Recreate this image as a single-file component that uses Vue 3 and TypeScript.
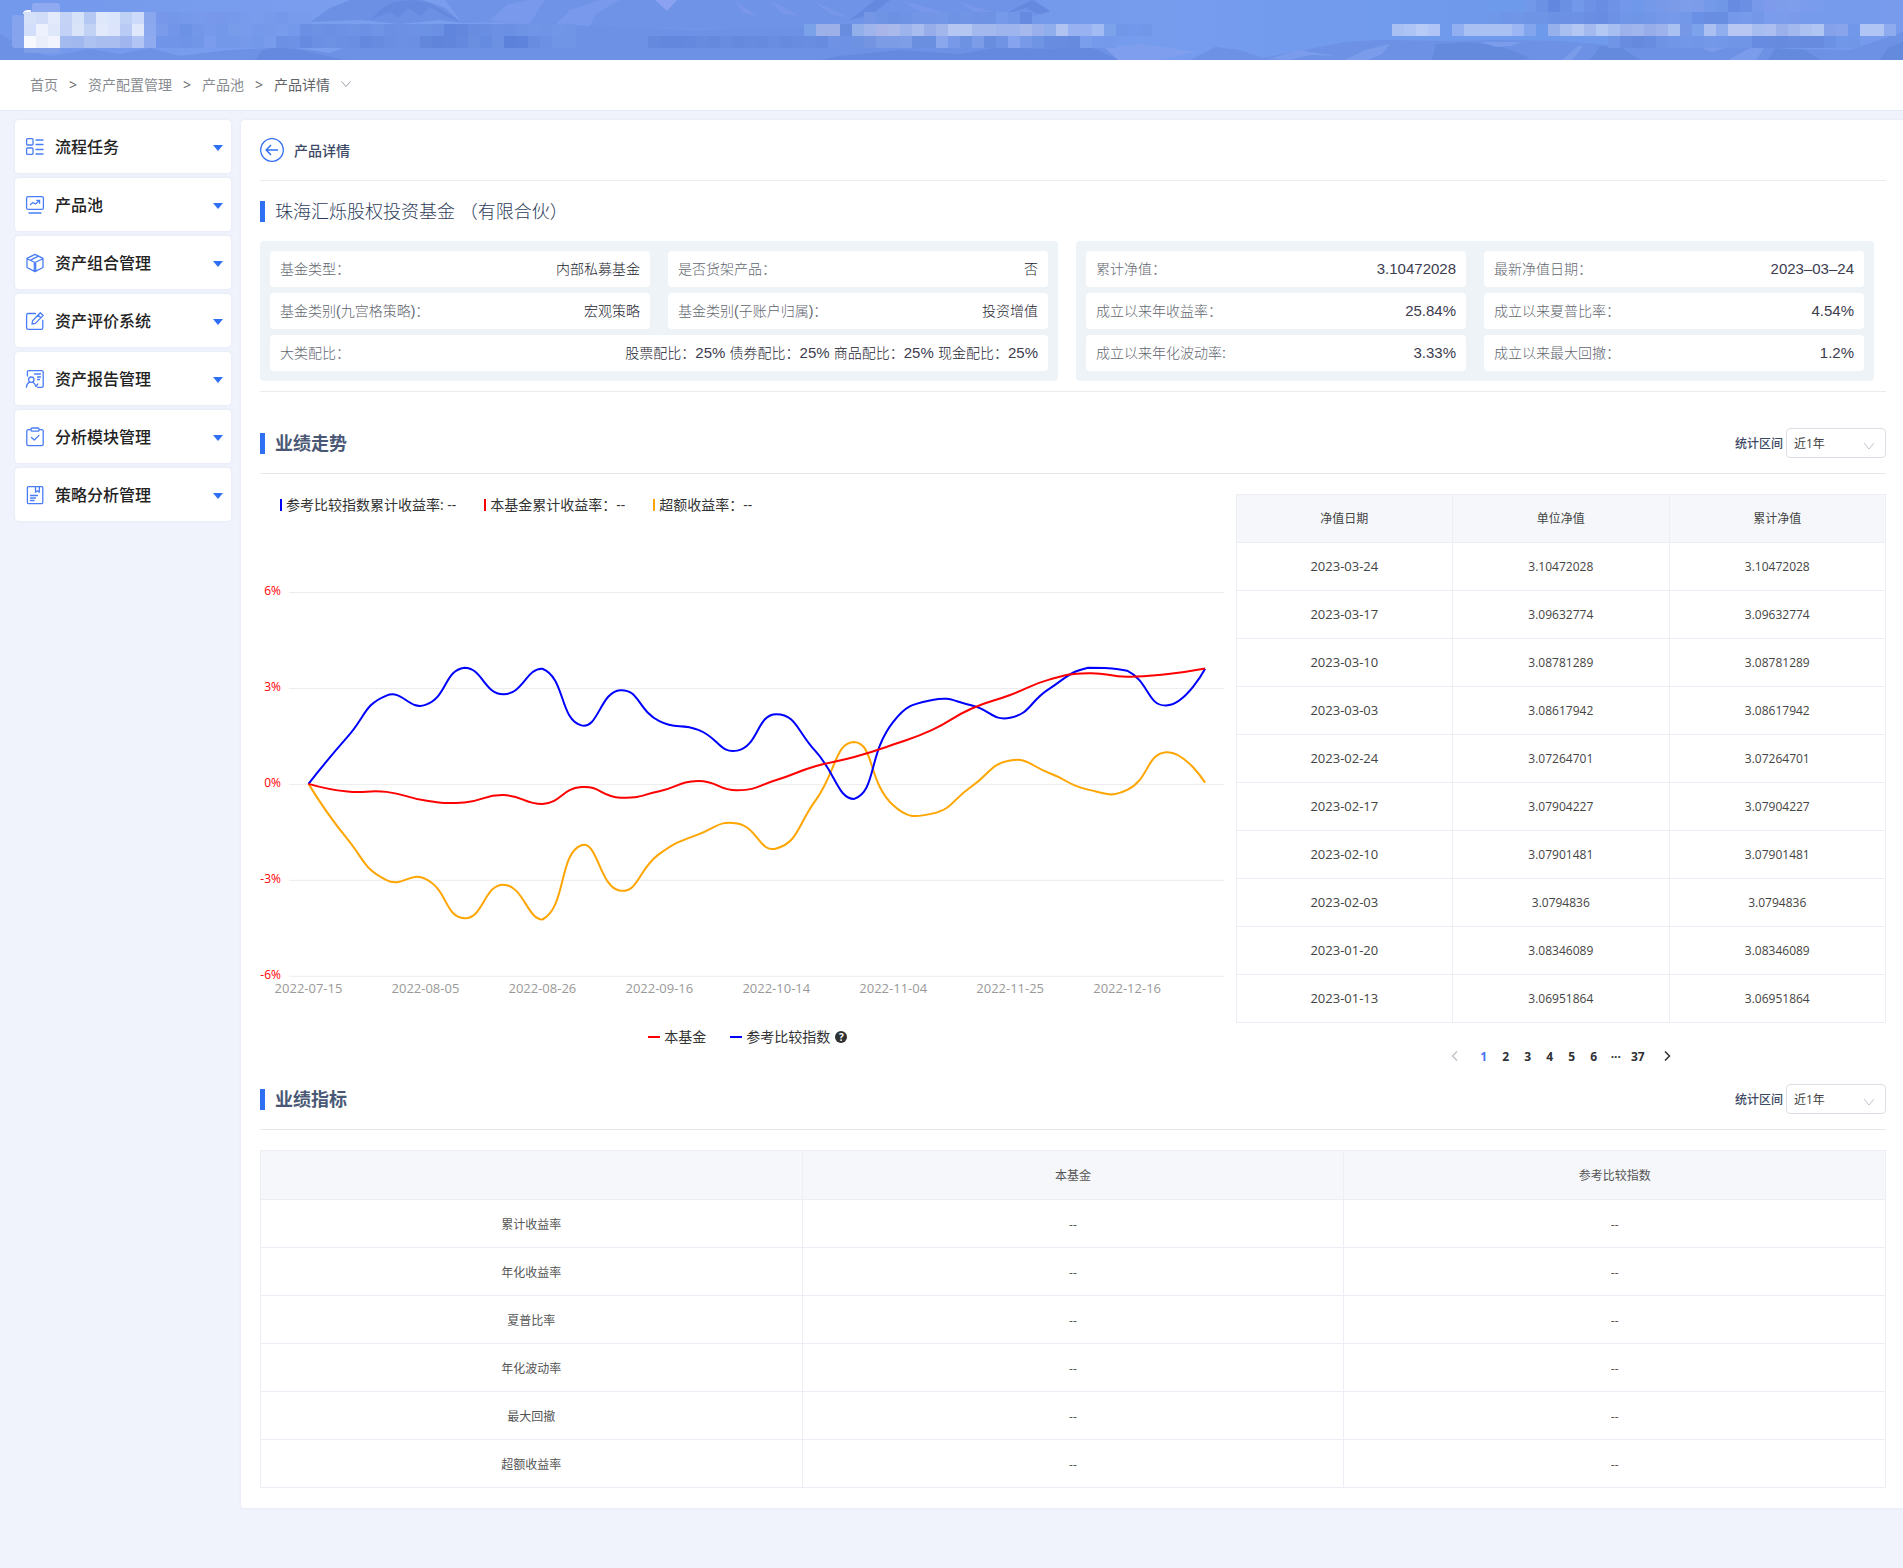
<script setup lang="ts">
import { ref } from 'vue'

interface Field {
  label: string
  value: string
}

const crumbs = ['首页', '资产配置管理', '产品池']

const menus = [
  { icon: 'tasks', text: '流程任务' },
  { icon: 'pool', text: '产品池' },
  { icon: 'cube', text: '资产组合管理' },
  { icon: 'edit', text: '资产评价系统' },
  { icon: 'report', text: '资产报告管理' },
  { icon: 'module', text: '分析模块管理' },
  { icon: 'strategy', text: '策略分析管理' },
]

const basics: Field[] = [
  { label: '基金类型：', value: '内部私募基金' },
  { label: '是否货架产品：', value: '否' },
  { label: '基金类别(九宫格策略)：', value: '宏观策略' },
  { label: '基金类别(子账户归属)：', value: '投资增值' },
]

const ratios = ['股票配比：', '债券配比：', '商品配比：', '现金配比：']

const figures: Field[] = [
  { label: '累计净值：', value: '3.10472028' },
  { label: '最新净值日期：', value: '2023–03–24' },
  { label: '成立以来年收益率：', value: '25.84%' },
  { label: '成立以来夏普比率：', value: '4.54%' },
  { label: '成立以来年化波动率:', value: '3.33%' },
  { label: '成立以来最大回撤：', value: '1.2%' },
]

const navs = [
  ['2023-03-24', '3.10472028'],
  ['2023-03-17', '3.09632774'],
  ['2023-03-10', '3.08781289'],
  ['2023-03-03', '3.08617942'],
  ['2023-02-24', '3.07264701'],
  ['2023-02-17', '3.07904227'],
  ['2023-02-10', '3.07901481'],
  ['2023-02-03', '3.0794836'],
  ['2023-01-20', '3.08346089'],
  ['2023-01-13', '3.06951864'],
]

const metrics = ['累计收益率', '年化收益率', '夏普比率', '年化波动率', '最大回撤', '超额收益率']
const pages = ['1', '2', '3', '4', '5', '6', '···', '37']
const page = ref('1')
const ranges = ['近1年', '近3年', '近5年']
const trendRange = ref('近1年')
const metricRange = ref('近1年')

/* Chart geometry */
const PLOT_LEFT = 29
const STEP = 39
const ZERO = 268
const UNIT = 32
const yTicks = [6, 3, 0, -3, -6]
const xTicks = ['2022-07-15', '2022-08-05', '2022-08-26', '2022-09-16', '2022-10-14', '2022-11-04', '2022-11-25', '2022-12-16']

const px = (i: number) => PLOT_LEFT + STEP / 2 + STEP * i
const py = (v: number) => ZERO - v * UNIT

const benchmark = [0, 1.47, 2.76, 2.47, 3.63, 2.8, 3.6, 1.83, 2.93, 1.96, 1.69, 1.04, 2.18, 1.03, -0.47, 1.94, 2.62, 2.46, 2.07, 2.97, 3.63, 3.54, 2.45, 3.6]
const fund = [0, -0.24, -0.25, -0.52, -0.58, -0.35, -0.63, -0.1, -0.43, -0.23, 0.09, -0.2, 0.12, 0.55, 0.84, 1.23, 1.69, 2.35, 2.78, 3.26, 3.46, 3.35, 3.43, 3.61]
const excess = [0, -1.73, -3.01, -2.97, -4.2, -3.15, -4.24, -1.92, -3.34, -2.19, -1.58, -1.24, -2.02, -0.53, 1.31, -0.67, -0.93, -0.09, 0.73, 0.34, -0.18, -0.19, 0.99, 0.04]

/* Bezier smoothing; control points never leave the value range of the series */
function smoothPath(values: number[]): string {
  const p = values.map((v, i) => [px(i), py(v)])
  const top = Math.min(...p.map((q) => q[1]))
  const bottom = Math.max(...p.map((q) => q[1]))
  const keep = (y: number) => Math.max(top, Math.min(bottom, y))
  let d = `M${p[0][0]} ${p[0][1]}`
  let c0 = p[0]
  for (let i = 1; i < p.length; i++) {
    const [x, y] = p[i]
    const [ax, ay] = p[i - 1]
    let c1 = [x, y]
    let next = [x, y]
    if (i < p.length - 1) {
      const [bx, by] = p[i + 1]
      const la = Math.hypot(x - ax, y - ay)
      const lb = Math.hypot(bx - x, by - y)
      const r = lb / (la + lb)
      const vx = (bx - ax) * 0.5
      const vy = (by - ay) * 0.5
      c1 = [x - vx * (1 - r), keep(y - vy * (1 - r))]
      next = [x + vx * r, keep(y + vy * r)]
    }
    d += `C${[...c0, ...c1, x, y].map((n) => n.toFixed(2)).join(' ')}`
    c0 = next
  }
  return d
}

const lines = [
  { color: '#ffa500', d: smoothPath(excess) },
  { color: '#0000ff', d: smoothPath(benchmark) },
  { color: '#ff0000', d: smoothPath(fund) },
]

/* Masked tiles in the banner: first column, row, then one colour per 12px tile ("-" leaves a hole) */
const tileRuns: [number, number, string][] = [
  [2, 1, 'd5e1f9 d0dcf8 e3eafb c3d2f5 d6e2f8 b5c8f4 dfe8fa dae4fa c0d1f6 cddafa 8aa6ec 7697ea 7597ea 7799eb 789aeb 7899eb 7798ea 7799eb 799beb 799cec 789aeb 7698ea 789bec 789bec'],
  [2, 2, 'd3dffa edf1fd dfe7fb c3d1f6 dae4f9 c2d2f5 e2e9fa dbe4fa b9cbf4 dfe7fb 8ca8ee 7a9aea 7395e9 6c92e6 7396e9 7799eb 7397e9 789bea 799bec 7598ea 7799ea 789bec 7499ea 6b8fe3 6d92e4 6b90e3 6d91e4 6e93e5 6c91e4 6f94e5 6b90e3 6c91e4 6d92e5 6c92e4 6b8fe3 6085dc 6287dd 688ce0 688de1 6c91e4 6b90e3 6e93e5 7095e7 6f94e6 7196e8 7095e7'],
  [2, 3, 'f6f8fe eaeefb f1f4fd a3baef a1b8ee aec2f2 a9beef a9beef a0b5ee b2c4f3 8faaee 7094e7 7094e7 6f93e6 7196e8 7b9cec 7498e9 7498e9 7799ea 7498e9 789bec 6c91e4 6d92e5 668adf 6b90e3 6d92e4 6b90e3 6a8fe2 6388dd 668bdf 6a8fe2 6c91e4 6b90e3 6287db 5f84da 6085db 6388dd 6a8fe1 658be0 6c91e3 5c81da 5e83dc 678ce0 6c91e4 7095e7 7095e7'],
  [54, 3, '6489dd 6287dc 6287dc 6388dd 668bdf 6489dd 688de0 6489dd 678cdf 668bde 688de1 658ade 678ce0 688de1 668bdf 7092e4'],
  [72, 1, '7496e5 7094e4 6c91e3 6e92e4 7395e6 7295e6 7396e7 6e92e4 7194e5 6f92e4 6e92e4 7799e9 7195e7 668ae0'],
  [67, 2, '7aa2e8 9db0e8 9db0e8 688cde 93afe9 9fb4ea a9b5e9 a9b9ea 9cb3eb a8bced 97adea a3b6eb b5c6f1 b5c6f1 a3b9ee a3b9ee 9eb4ec 9eb4ec a5b9ed 9ab0ec 91aeec b1c4f1 98b2f1 98b2f1 a3bbf3 7da2ec 7197e9 7298eb 7197e9'],
  [71, 3, '6d92e2 7494e2 7c9ce6 7c9ce6 7e9ee8 6b8fdf 6b8fe0 8aa6ec 7899e7 6e92e2 7d9ce7 688cde 7094e3 85a3ee 7799e8 7094e4 688de0 688cdf 668bde 7b9eec 7599eb 7499eb'],
  [127, 0, '7298e9 6b91e4 6187de 6a90e3 7198e9 6c91e5 688de2 6d92e6 7297eb 6f97ea 7599e9 7899e8 7b9be9 7d9ce9 7c9be9 7599e9 7096e6 678be0 6b90e3 7899e9 7d9bea 7d9cea 7e9deb 7b9cec 7a9cec'],
  [124, 1, '7098e9 6e95e8 7096e8 6e94e6 6e94e6 6b91e4 6b90e4 6c91e5 698ee2 678ce2 6c91e5 7096e8 6f95e7 7196e8 7698e9 7799e9 7498e8 6a90e5 688de1 688ee2 7598ea 789aeb 7597e8 7b9cec 7b9cea 7b9bea'],
  [116, 2, 'a9c0f3 aec4f4 b7cbf6 b0c5f5 - 92aff1 a9c1f2 a9c1f2 a9c1f2 a9c1f2 9bb6f2 83a5ee - 96b0ec a9bff0 b3c7f2 a4baee b3c8f2 a7bef0 9db1ea a0b5ec 97adea 9db2eb a9c1f1 7597e6 7ba2ea abbff1 90aeee b8c7f2 b8c7f2 a7bcef abbeef 99b0ea a3b9ee adc1f1 b0c5f2 85a1ea 89a4eb 7097e9 b0c5f4 b0c5f4 8fabf0'],
  [134, 3, '7095e6 688de0 6489dd 678ce0 6e93e5 7195e7 7296e8 7196e7 7498e8 7397e8 7095e6 7095e6 678be0 668bdf 658ade 678ce0 668bdf 668bdf 6b91e4 7197e9 7096e8'],
]

const tiles = tileRuns.flatMap(([col, row, colors]) =>
  colors
    .split(' ')
    .map((c, i) => ({ x: (col + i) * 12, y: row * 12, c }))
    .filter((t) => t.c.length === 6)
    .map((t) => ({ ...t, c: '#' + t.c })),
)
</script>

<template>
  <div class="page">
    <header class="banner">
      <svg class="banner-art" viewBox="0 0 1903 60" preserveAspectRatio="xMinYMin slice" aria-hidden="true">
        <defs>
          <linearGradient id="sky" x1="0" x2="1" y1="0" y2="0">
            <stop offset="0" stop-color="#7399ec" />
            <stop offset="0.2" stop-color="#7c9eef" />
            <stop offset="0.45" stop-color="#7095e8" />
            <stop offset="0.6" stop-color="#769cee" />
            <stop offset="0.8" stop-color="#6e9aec" />
            <stop offset="1" stop-color="#789bec" />
          </linearGradient>
        </defs>
        <rect width="1903" height="60" fill="url(#sky)" />
        <path fill="#6d91e5" d="M0 34 14 42 30 52 52 56 90 49 120 54 150 48 180 56 230 50 290 47 330 53 380 34 460 26 560 22 640 28 700 30 830 25 1000 26 1100 46 1140 60H0z" />
        <path fill="#6c90e4" d="M310 22 330 8 350 0 396 0 420 -1 445 8 462 23 440 20 400 24 360 20z" />
        <path fill="#6f93e6" d="M445 0H1035L1050 12 1020 20 880 18 760 29 640 28 560 22 530 26 500 22 462 23z" />
        <path fill="#7999ec" d="M490 20 508 4 530 0H545L528 26 512 23zM556 24 570 10 588 4 600 0H620L596 14 590 26z" />
        <path fill="#8aa2f1" d="M655 0H677L667 11z" />
        <path fill="#6489de" d="M370 20 382 8 394 2 410 0 430 3 446 12 460 22 444 15 430 7 420 16 408 8 398 18 390 12zM850 20 875 0H890L872 14zM1000 16 1032 0 1050 11 1038 14 1026 8z" />
        <path fill="#7897ea" d="M735 0 760 18 742 12zM770 0 800 16 782 14zM812 0 850 18 830 14zM900 0 950 14 920 12zM960 2 1000 14 975 13z" />
        <path fill="#6489de" d="M255 60 262 51 275 47 300 50 345 60zM840 56 900 50 960 54 1000 47 1040 49 1090 47 1120 60H820z" />
        <path fill="#7f9fee" d="M1105 48 1140 44 1170 48 1195 52 1160 60H1118z" />
        <path fill="#6c91e5" d="M1190 60 1215 47 1240 50 1262 58 1300 51 1345 42 1380 40 1440 41 1500 40 1560 41 1620 46 1700 44 1760 48 1850 50 1903 32V60z" />
        <path fill="#648ade" d="M1432 60 1436 44 1470 42 1500 46 1530 58 1520 60zM1590 60 1600 46 1622 48 1640 60zM1768 60 1775 48 1805 50 1820 60zM1880 60 1888 48 1903 42V60z" />
        <path fill="#7a9ceb" d="M1268 59 1300 50 1335 56 1310 55 1290 60zM1345 60 1365 50 1390 44 1382 54 1368 60zM1480 42H1522L1512 46 1496 47zM1562 60 1578 46 1583 46 1572 60zM1694 45 1736 44 1712 52zM1728 60 1752 47 1764 48 1756 60z" />
        <rect x="32" y="3" width="28" height="12" rx="3" fill="#8faaf0" />
        <rect x="12" y="15" width="14" height="33" rx="3" fill="#86a3ee" />
        <rect x="24" y="46" width="36" height="7" fill="#7f9eea" />
        <path d="M24 14q0-3 4-3h3" fill="none" stroke="#f3f7ff" stroke-width="2" />
        <rect v-for="(t, i) in tiles" :key="i" :x="t.x" :y="t.y" width="12" height="12" :fill="t.c" />
      </svg>
    </header>

    <nav class="crumbs" aria-label="面包屑">
      <template v-for="c in crumbs" :key="c">
        <a href="#">{{ c }}</a>
        <span class="sep">&gt;</span>
      </template>
      <a href="#" class="current">产品详情</a>
      <svg class="crumb-arrow" width="12" height="8" viewBox="0 0 12 8" fill="none" stroke="#9aa0a8"><path d="M1.500 1.500 6 6.500l4.500-5" /></svg>
    </nav>

    <div class="body">
      <aside class="side">
        <button v-for="m in menus" :key="m.text" type="button" class="menu">
          <svg class="menu-icon" width="20" height="20" viewBox="0 0 20 20" fill="none" stroke="#4a7df5" stroke-width="1.300" stroke-linecap="round" stroke-linejoin="round">
            <g v-if="m.icon === 'tasks'">
              <rect x="1.600" y="1.600" width="6.400" height="6.400" rx="1" />
              <rect x="1.600" y="11" width="6.400" height="6.400" rx="1" />
              <path d="M11 3h7M11 7.500h7M11 12.500h7M11 17h7" />
            </g>
            <g v-else-if="m.icon === 'pool'">
              <rect x="1.600" y="1.600" width="16.800" height="12.800" rx="1.500" />
              <path d="M4 18h12M5.500 9.500 8 7.500l2.500 1.500 4-3.500M11.800 5.300h2.800v3" />
            </g>
            <g v-else-if="m.icon === 'cube'">
              <path d="M10 1.300 18 5.300v9.200l-8 4.200-8-4.200V5.300zM2.500 6 10 9.500 17.500 6M9.300 10v8M10.700 10v8M5.500 7.200 13.500 3.200" />
            </g>
            <g v-else-if="m.icon === 'edit'">
              <path d="M10.500 2.500H3a1.400 1.400 0 0 0-1.400 1.400v13A1.400 1.400 0 0 0 3 18.300h13.400a1.400 1.400 0 0 0 1.400-1.400V9.500M7 13.200l.6-3.500 7.700-8 2.900 2.700-7.800 8zM13 4l2.800 2.800" />
            </g>
            <g v-else-if="m.icon === 'report'">
              <path d="M2.400 7V3a1.400 1.400 0 0 1 1.400-1.400h12.800A1.400 1.400 0 0 1 18.200 3v14a1.400 1.400 0 0 1-1.400 1.400h-4.300M9.500 5h6M12.500 8h3M12.500 10.500h2" />
              <circle cx="6.300" cy="10.700" r="2.700" />
              <path d="M1.400 18.200c.3-2.800 1.600-4.400 3.200-5M8 13.200c1.300.8 2.300 2.300 3 4.300l1.800-2.500" />
            </g>
            <g v-else-if="m.icon === 'module'">
              <rect x="1.800" y="2.600" width="16.400" height="16" rx="1.400" />
              <rect x="6" y="1" width="8" height="3.200" rx="1" fill="#fff" />
              <path d="M6.500 10.500 9.300 13l4.700-4.600" />
            </g>
            <g v-else>
              <rect x="2.400" y="1.600" width="15.400" height="17" rx="1" />
              <path d="M10.500 1.800v5.400l1.900-1.400 1.900 1.400V1.800M5.500 10.500h7M5.500 13h5M5.500 15.500h3.500" />
            </g>
          </svg>
          <span class="menu-text">{{ m.text }}</span>
          <svg class="caret" width="10" height="6" viewBox="0 0 10 6"><path d="M0 0h10L5 6z" fill="#2f6ff5" /></svg>
        </button>
      </aside>

      <main class="content">
        <div class="top">
          <button type="button" class="back" aria-label="返回">
            <svg width="24" height="24" viewBox="0 0 24 24" fill="none" stroke="#3370f0" stroke-width="1.300">
              <circle cx="12" cy="12" r="11.300" />
              <path d="M18 12H6.500M11 7l-4.800 5 4.800 5" stroke-width="1.500" />
            </svg>
          </button>
          <span class="top-title">产品详情</span>
        </div>

        <h1 class="title fund-name">珠海汇烁股权投资基金 （有限合伙）</h1>

        <div class="panels">
          <dl class="panel">
            <div v-for="f in basics" :key="f.label" class="cell">
              <dt>{{ f.label }}</dt>
              <dd>{{ f.value }}</dd>
            </div>
            <div class="cell wide">
              <dt>大类配比：</dt>
              <dd><template v-for="r in ratios" :key="r">{{ r }}<span class="num">25% </span></template></dd>
            </div>
          </dl>
          <dl class="panel">
            <div v-for="f in figures" :key="f.label" class="cell">
              <dt>{{ f.label }}</dt>
              <dd class="num">{{ f.value }}</dd>
            </div>
          </dl>
        </div>

        <section>
          <div class="section-head">
            <h2 class="title">业绩走势</h2>
            <label class="range">
              <span>统计区间</span>
              <span class="select-box">
                <select v-model="trendRange"><option v-for="r in ranges" :key="r">{{ r }}</option></select>
                <svg width="12" height="8" viewBox="0 0 12 8" fill="none" stroke="#c0c4cc"><path d="M1 1 6 7l5-6" /></svg>
              </span>
            </label>
          </div>

          <div class="trend-body">
            <div class="chart">
              <div class="readout">
                <span class="read blue"><span>参考比较指数累计收益率: --</span></span>
                <span class="read red"><span>本基金累计收益率：--</span></span>
                <span class="read orange"><span>超额收益率：--</span></span>
              </div>
              <svg class="plot" viewBox="0 0 976 490" role="img" aria-label="业绩走势">
                <g v-for="t in yTicks" :key="t">
                  <rect :x="PLOT_LEFT" :y="py(t)" width="936" height="1" fill="#ececec" />
                  <text class="y-label" x="21" :y="py(t) + 3">{{ t }}%</text>
                </g>
                <text v-for="(t, i) in xTicks" :key="t" class="x-label" :x="px(i * 3)" y="477">{{ t }}</text>
                <path v-for="l in lines" :key="l.color" :d="l.d" :stroke="l.color" stroke-width="2" fill="none" stroke-linejoin="bevel" />
              </svg>
              <div class="legend">
                <span class="key red"><span>本基金</span></span>
                <span class="key blue"><span>参考比较指数</span></span>
                <span class="help">?</span>
              </div>
            </div>

            <div class="nav-list">
              <table class="grid">
                <thead>
                  <tr><th>净值日期</th><th>单位净值</th><th>累计净值</th></tr>
                </thead>
                <tbody>
                  <tr v-for="n in navs" :key="n[0]">
                    <td class="date">{{ n[0] }}</td>
                    <td>{{ n[1] }}</td>
                    <td>{{ n[1] }}</td>
                  </tr>
                </tbody>
              </table>
              <div class="pager">
                <button type="button" class="prev" aria-label="上一页">
                  <svg width="8" height="10" viewBox="0 0 8 10" fill="none" stroke="#c0c4cc" stroke-width="1.500"><path d="M6 .5 1.500 5 6 9.500" /></svg>
                </button>
                <button v-for="p in pages" :key="p" type="button" :class="{ on: p === page }" @click="page = p">{{ p }}</button>
                <button type="button" class="next" aria-label="下一页">
                  <svg width="8" height="10" viewBox="0 0 8 10" fill="none" stroke="#303133" stroke-width="1.500"><path d="M2 .5 6.500 5 2 9.500" /></svg>
                </button>
              </div>
            </div>
          </div>
        </section>

        <section>
          <div class="section-head second">
            <h2 class="title">业绩指标</h2>
            <label class="range">
              <span>统计区间</span>
              <span class="select-box">
                <select v-model="metricRange"><option v-for="r in ranges" :key="r">{{ r }}</option></select>
                <svg width="12" height="8" viewBox="0 0 12 8" fill="none" stroke="#c0c4cc"><path d="M1 1 6 7l5-6" /></svg>
              </span>
            </label>
          </div>
          <table class="grid metrics">
            <thead>
              <tr><th></th><th>本基金</th><th>参考比较指数</th></tr>
            </thead>
            <tbody>
              <tr v-for="m in metrics" :key="m"><td>{{ m }}</td><td>--</td><td>--</td></tr>
            </tbody>
          </table>
        </section>
      </main>
    </div>
  </div>
</template>

<style>
body {
  background: #f0f3fb;
}
</style>

<style scoped>
.page {
  min-height: 100vh;
  font-family: 'Open Sans', 'Noto Sans CJK SC', sans-serif;
  font-size: 14px;
  color: #333;
}
.page * {
  box-sizing: border-box;
}
button,
select {
  font-family: inherit;
  color: inherit;
  cursor: pointer;
}
a {
  color: inherit;
  text-decoration: none;
}

.banner {
  height: 60px;
  background: #7197ea;
  overflow: hidden;
}
.banner-art {
  display: block;
  width: 100%;
  height: 60px;
}

.crumbs {
  display: flex;
  align-items: center;
  height: 51px;
  padding: 0 0 2px 30px;
  background: #fff;
  border-bottom: 1px solid #e4e8f5;
  color: #888b90;
}
.sep {
  width: 30px;
  text-align: center;
  color: #666;
}
.current {
  color: #606266;
}
.crumb-arrow {
  margin-left: 10px;
}

.body {
  display: flex;
  align-items: flex-start;
  gap: 10px;
  padding: 9px 0 60px 15px;
}
.side {
  flex: none;
  display: flex;
  flex-direction: column;
  gap: 5px;
  width: 216px;
}
.menu {
  display: flex;
  align-items: center;
  height: 53px;
  padding: 0 8px 0 10px;
  border: 0;
  border-radius: 4px;
  background: #fff;
  box-shadow: 0 0 3px #dfe5f3;
}
.menu-icon {
  flex: none;
}
.menu-text {
  flex: 1;
  margin-left: 10px;
  padding-bottom: 2px;
  text-align: left;
  font-size: 16px;
  font-weight: 500;
  color: #222;
}
.caret {
  flex: none;
  margin-top: 2px;
}

.content {
  flex: 1;
  min-width: 0;
  padding: 0 17px 20px 19px;
  background: #fff;
  border-radius: 4px 0 0 4px;
  box-shadow: 0 0 3px #dfe5f3;
}
.top {
  display: flex;
  align-items: center;
  gap: 10px;
  height: 61px;
  border-bottom: 1px solid #ebebeb;
}
.back {
  height: 24px;
  padding: 0;
  border: 0;
  background: none;
}
.top-title {
  font-weight: 500;
  color: #3d4a66;
}
.title {
  margin: 0;
  padding-left: 10px;
  border-left: 5px solid #2f6ff5;
  font-size: 18px;
  line-height: 21px;
  font-weight: 700;
  color: #4a5875;
}
.fund-name {
  margin: 20px 0 19px;
  font-weight: 300;
  color: #2f3d5c;
}

.panels {
  display: flex;
  gap: 18px;
  padding: 0 12px 10px 0;
  border-bottom: 1px solid #ebebeb;
}
.panel {
  flex: 1;
  display: grid;
  grid-template-columns: 1fr 1fr;
  gap: 6px 18px;
  margin: 0;
  padding: 10px;
  border-radius: 4px;
  background: #eef3f8;
}
.cell {
  display: flex;
  justify-content: space-between;
  align-items: center;
  height: 36px;
  padding: 0 10px 2px;
  border-radius: 4px;
  background: #fff;
  font-family: 'Liberation Sans', 'Noto Sans CJK SC', sans-serif;
  font-weight: 300;
}
.wide {
  grid-column: span 2;
}
dt {
  color: #62666f;
}
dd {
  margin: 0;
  color: #1c1c30;
}
.num {
  font-size: 15px;
  color: #3c3c50;
}

.section-head {
  display: flex;
  align-items: center;
  justify-content: space-between;
  height: 46px;
  margin: 36px 0 20px;
  padding-bottom: 15px;
  border-bottom: 1px solid #e8e8e8;
}
.second {
  margin-top: 12px;
}
.range {
  display: flex;
  align-items: center;
  gap: 3px;
  font-size: 12px;
  font-weight: 500;
  color: #3d4a66;
}
.select-box {
  position: relative;
  width: 100px;
  height: 30px;
}
.select-box select {
  width: 100%;
  height: 30px;
  padding: 0 7px;
  border: 1px solid #dcdfe6;
  border-radius: 4px;
  background: #fff;
  appearance: none;
  font-size: 12px;
  color: #444;
}
.select-box svg {
  position: absolute;
  right: 11px;
  top: 14px;
  pointer-events: none;
}

.trend-body {
  display: grid;
  grid-template-columns: 3fr 2fr;
}
.readout {
  display: flex;
  gap: 28px;
  height: 22px;
  padding-left: 20px;
  align-items: center;
}
.read {
  display: flex;
  align-items: center;
  gap: 4px;
}
.read > span,
.key > span {
  padding-bottom: 2px;
}
.read::before {
  content: '';
  width: 2px;
  height: 12px;
}
.read.blue::before,
.key.blue::before {
  background: #00f;
}
.read.red::before,
.key.red::before {
  background: #f00;
}
.read.orange::before {
  background: #ffa500;
}
.plot {
  display: block;
  width: 100%;
}
.y-label {
  font-size: 12px;
  text-anchor: end;
  fill: #f00;
}
.x-label {
  font-size: 13px;
  text-anchor: middle;
  fill: #999;
}
.legend {
  display: flex;
  align-items: center;
  justify-content: center;
  height: 22px;
  margin-top: 20px;
  margin-bottom: 1px;
}
.key {
  display: flex;
  align-items: center;
  gap: 4px;
}
.key + .key {
  margin-left: 24px;
}
.key::before {
  content: '';
  width: 12px;
  height: 2px;
}
.help {
  width: 12px;
  height: 12px;
  margin-left: 5px;
  border-radius: 50%;
  background: #303133;
  color: #fff;
  font-size: 10px;
  font-weight: 700;
  line-height: 12px;
  text-align: center;
}

.grid {
  width: 100%;
  table-layout: fixed;
  border-collapse: collapse;
  font-size: 12px;
  line-height: 18px;
  color: #444;
}
.grid th,
.grid td {
  height: 48px;
  padding: 0;
  border: 1px solid #ebeef5;
  text-align: center;
  font-weight: 400;
}
.grid th {
  background: #f5f7fb;
}
.grid .date {
  padding-bottom: 2px;
  font-size: 13px;
}
.grid.metrics {
  color: #555;
}
.grid.metrics th,
.grid.metrics td {
  padding-top: 2px;
}
.grid.metrics th {
  height: 49px;
}
.pager {
  display: flex;
  justify-content: center;
  align-items: center;
  height: 32px;
  margin-top: 17px;
}
.pager button {
  width: 22px;
  height: 22px;
  padding: 0;
  border: 0;
  background: none;
  font-size: 12px;
  font-weight: 700;
  color: #303133;
}
.pager .on {
  color: #4a72f5;
}
.pager .prev {
  margin-right: 7px;
}
.pager .next {
  margin-left: 7px;
}
</style>
